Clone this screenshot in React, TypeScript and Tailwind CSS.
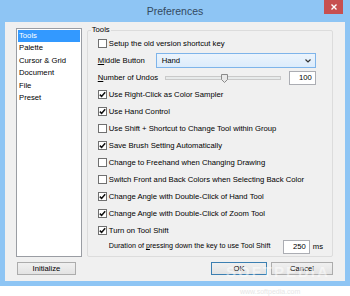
import React from 'react';

const FONT = { fontFamily: '"Liberation Sans", Arial, sans-serif' };

const LIST_ITEMS = ['Tools', 'Palette', 'Cursor & Grid', 'Document', 'File', 'Preset'];

const CHECKS: { label: string; checked: boolean }[] = [
  { label: 'Use Right-Click as Color Sampler', checked: true },
  { label: 'Use Hand Control', checked: true },
  { label: 'Use Shift + Shortcut to Change Tool within Group', checked: false },
  { label: 'Save Brush Setting Automatically', checked: true },
  { label: 'Change to Freehand when Changing Drawing', checked: false },
  { label: 'Switch Front and Back Colors when Selecting Back Color', checked: false },
  { label: 'Change Angle with Double-Click of Hand Tool', checked: true },
  { label: 'Change Angle with Double-Click of Zoom Tool', checked: true },
  { label: 'Turn on Tool Shift', checked: true },
];

function Check({ checked }: { checked: boolean }) {
  return (
    <span className="shrink-0 w-[9px] h-[9px] border border-[#707070] bg-white flex items-center justify-center">
      {checked && (
        <svg width="7" height="7" viewBox="0 0 7 7">
          <path d="M0.8 3.6 L2.6 5.4 L6.2 1.2" fill="none" stroke="#111" strokeWidth="1.5" />
        </svg>
      )}
    </span>
  );
}

function CheckRow({ label, checked }: { label: string; checked: boolean }) {
  return (
    <div className="flex items-center h-[17px] gap-[2px]">
      <Check checked={checked} />
      <span className="whitespace-nowrap">{label}</span>
    </div>
  );
}

function NumBox({ value }: { value: string }) {
  return (
    <span className="shrink-0 w-[27px] h-[14px] border border-[#abadb3] bg-white flex items-center justify-end pr-[3px]">
      {value}
    </span>
  );
}

function Btn({ label, w, primary }: { label: string; w: string; primary?: boolean }) {
  return (
    <div
      className={
        'h-[13px] flex items-center justify-center border bg-gradient-to-b from-[#f0f0f0] to-[#e3e3e3] ' +
        w +
        (primary ? ' border-[#3c7fb1]' : ' border-[#acacac]')
      }
    >
      {label}
    </div>
  );
}

export default function App() {
  return (
    <div className="w-[350px] h-[296px] bg-white relative overflow-hidden text-[7.7px] text-black" style={FONT}>
      <div className="w-[350px] h-[286px] bg-[#8ec5f4] flex flex-col">
        {/* title bar */}
        <div className="h-[22px] flex items-start">
          <div className="w-[26px]" />
          <div className="flex-1 text-center text-[10.5px] leading-[22px] text-[#33495e]">Preferences</div>
          <div className="w-[19px] h-[14px] mr-[7px] bg-[#c75050] flex items-center justify-center">
            <svg width="6" height="6" viewBox="0 0 6 6">
              <path d="M0.5 0.5 L5.5 5.5 M5.5 0.5 L0.5 5.5" stroke="#fff" strokeWidth="1.4" />
            </svg>
          </div>
        </div>

        {/* client area */}
        <div className="mx-[5px] h-[259px] bg-[#f0f0f0] pl-[11px] pr-[12px] pt-[6px] flex flex-col">
          <div className="flex items-start gap-[5px]">
            <div className="w-[72px] h-[229px] border border-[#9a9da3] bg-white p-[1px]">
              {LIST_ITEMS.map((it, i) => (
                <div
                  key={it}
                  className={
                    'h-[12.4px] leading-[12.4px] pl-[1px] whitespace-nowrap ' +
                    (i === 0 ? 'bg-[#3399ff] text-white' : '')
                  }
                >
                  {it}
                </div>
              ))}
            </div>

            <fieldset className="w-[240px] h-[232px] -mt-[3px] border border-[#dcdcdc] rounded-[2px] pl-[10px] pr-[9px]">
              <legend className="ml-[-7px] px-[1px] leading-[10px]">Tools</legend>
              <div className="flex flex-col">
                <CheckRow label="Setup the old version shortcut key" checked={false} />

                <div className="flex items-center h-[17px]">
                  <span className="w-[58px] whitespace-nowrap">
                    <span className="underline">M</span>iddle Button
                  </span>
                  <div className="w-[160px] h-[15px] border border-[#7eb4ea] bg-gradient-to-b from-[#ecf4fc] to-[#dcecfc] flex items-center pl-[5px] pr-[4px]">
                    <span className="flex-1">Hand</span>
                    <svg width="6" height="4" viewBox="0 0 6 4">
                      <path d="M0.5 0.5 L3 3 L5.5 0.5" fill="none" stroke="#333" strokeWidth="1.2" />
                    </svg>
                  </div>
                </div>

                <div className="flex items-center h-[17px]">
                  <span className="w-[67px] whitespace-nowrap">
                    <span className="underline">N</span>umber of Undos
                  </span>
                  <div className="relative w-[116px] h-[4px] border border-[#c9c9c9] bg-[#e7eaea]">
                    <svg className="absolute left-[55px] -top-[3px]" width="7" height="9" viewBox="0 0 7 9">
                      <path d="M0.5 0.5 H6.5 V5.5 L3.5 8.5 L0.5 5.5 Z" fill="#e8e8e8" stroke="#8a8a8a" />
                    </svg>
                  </div>
                  <span className="ml-[8px]">
                    <NumBox value="100" />
                  </span>
                </div>

                {CHECKS.map((c) => (
                  <CheckRow key={c.label} label={c.label} checked={c.checked} />
                ))}

                <div className="flex items-center h-[15px] pl-[11px]">
                  <span className="w-[174px] whitespace-nowrap text-[7.2px]">
                    Duration of <span className="underline">p</span>ressing down the key to use Tool Shift
                  </span>
                  <NumBox value="250" />
                  <span className="ml-[3px]">ms</span>
                </div>
              </div>
            </fieldset>
          </div>

          <div className="mt-[5px] flex items-center">
            <div className="ml-[1px]">
              <Btn label="Initialize" w="w-[59px]" />
            </div>
            <div className="flex-1" />
            <div className="flex gap-[4px]">
              <Btn label="OK" w="w-[56px]" primary />
              <Btn label="Cancel" w="w-[62px]" />
            </div>
          </div>
        </div>
      </div>

      {/* watermark */}
      <div className="absolute left-[226px] top-[261px] text-[15px] font-bold tracking-[2px] text-white/50 pointer-events-none">
        SOFTPEDIA
      </div>
      <div className="absolute left-[240px] top-[287px] text-[7px] text-[#e6e6e6] pointer-events-none">
        www.softpedia.com
      </div>
    </div>
  );
}
